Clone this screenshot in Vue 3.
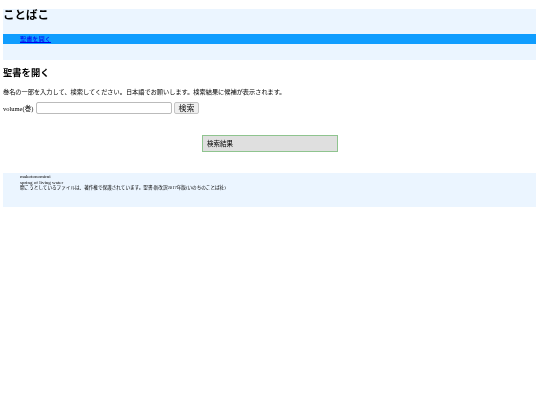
<template>
  <div class="page">
    <header class="site-head">
      <h1 class="logo">ことばこ</h1>
      <nav class="nav">
        <a href="#" class="nav-link">聖書を開く</a>
      </nav>
    </header>

    <main class="main">
      <h2 class="title">聖書を開く</h2>
      <p class="lead">巻名の一部を入力して、検索してください。日本語でお願いします。検索結果に候補が表示されます。</p>
      <form class="search" @submit.prevent>
        <label class="label" for="volume">volume(巻)</label>
        <input id="volume" v-model="volume" type="text" class="input">
        <button class="btn">検索</button>
      </form>
      <div class="result">検索結果</div>
    </main>

    <footer class="site-foot">
      <div>makotonomimi</div>
      <div>spring of living water</div>
      <div class="notice">開こうとしているファイルは、著作権で保護されています。聖書:新改訳2017年版(いのちのことば社)</div>
    </footer>
  </div>
</template>

<script setup>
import { ref } from 'vue'

const volume = ref('')
</script>

<style>
html, body {
  background: #fff;
}
</style>

<style scoped>
.page {
  padding: 9px 4px 0 3px;
  font-family: "Liberation Serif", "Noto Sans CJK JP", serif;
  color: #000;
  filter: blur(0.3px);
}

.site-head {
  height: 51px;
  background: #ebf5ff;
}

.logo {
  margin: 0;
  height: 25px;
  font-size: 11.5px;
  line-height: 13px;
  font-weight: 700;
}

.nav {
  height: 10px;
  padding-left: 17px;
  background: #0f9dff;
  font-size: 6.2px;
  line-height: 10px;
}

.nav-link {
  color: #0000ee;
}

.main {
  height: 113px;
}

.title {
  margin: 0;
  padding-top: 7px;
  font-size: 9.3px;
  line-height: 13px;
  font-weight: 700;
}

.lead {
  margin: 7px 0 0;
  font-size: 6.2px;
  line-height: 9px;
}

.search {
  display: flex;
  align-items: center;
  gap: 1px;
  margin-top: 6px;
  height: 12px;
  font-size: 6.5px;
}

.input {
  box-sizing: border-box;
  width: 136px;
  height: 12px;
  margin: 0 0 0 2px;
  padding: 0 2px;
  border: 1px solid #bbb;
  border-radius: 2px;
  background: #fff;
}

.btn {
  box-sizing: border-box;
  width: 25px;
  height: 12px;
  margin-left: 0.7px;
  padding: 0;
  border: 1px solid #c4c4c4;
  border-radius: 2px;
  background: #efefef;
  font-family: "Noto Sans CJK JP", sans-serif;
  font-size: 8px;
  line-height: 10px;
  color: #111;
}

.result {
  box-sizing: border-box;
  width: 136px;
  height: 17px;
  margin: 21px 0 0 199px;
  padding-left: 4px;
  border: 1px solid #8fc48f;
  background: #dfdfdf;
  font-size: 6.5px;
  line-height: 15px;
}

.site-foot {
  box-sizing: border-box;
  height: 34px;
  padding: 1px 0 0 17px;
  background: #ebf5ff;
  font-size: 5px;
  line-height: 5.7px;
}

.notice {
  font-size: 4.6px;
}
</style>
